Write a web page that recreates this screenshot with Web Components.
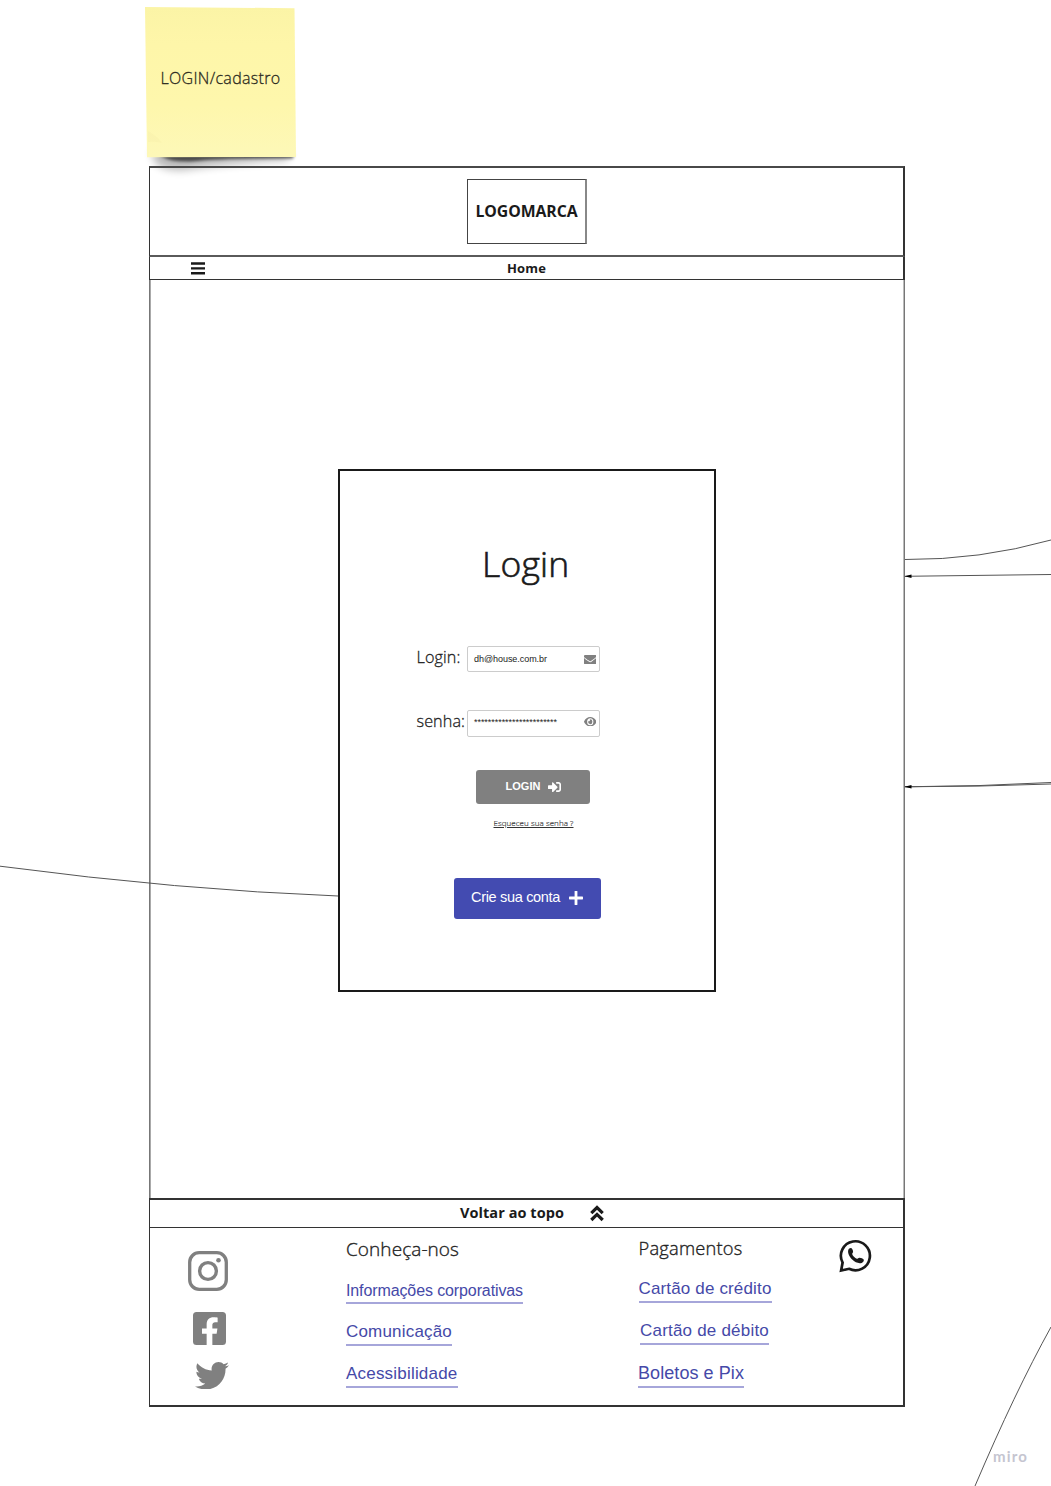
<!DOCTYPE html>
<html lang="pt-BR">
<head>
<meta charset="utf-8">
<title>LOGIN/cadastro</title>
<style>
html{background:#fff}
body{margin:0;width:1051px;height:1486px;overflow:hidden}
</style>
</head>
<body>
<flow-board></flow-board>
<script>
const define=(name,html,ready)=>{
  const t=document.createElement('template');
  t.innerHTML=html;
  customElements.define(name,class extends HTMLElement{
    connectedCallback(){
      if(this.shadowRoot)return;
      this.attachShadow({mode:'open'}).append(t.content.cloneNode(true));
      if(ready)ready(this);
    }
  });
};

/* One line of text: size, line height and tracked width come from attributes. */
define('text-line',`<style>
:host{display:block;white-space:pre;flex:none;font-family:"Open Sans",sans-serif}
:host([arial]){font-family:"Liberation Sans",Arial,sans-serif}
:host([light]){font-weight:300;-webkit-text-stroke:.018em currentColor}
span{display:inline-block;text-decoration:inherit}
</style><span><slot></slot></span>`,el=>{
  el.style.fontSize=el.getAttribute('size')+'px';
  el.style.lineHeight=el.getAttribute('lh')+'px';
  const w=+el.getAttribute('w'),s=el.shadowRoot.querySelector('span');
  const fit=()=>{
    s.style.letterSpacing='0px';
    const n=el.textContent.length;
    s.style.letterSpacing=((w-s.getBoundingClientRect().width)/n)+'px';
  };
  if(w){requestAnimationFrame(fit);document.fonts.ready.then(fit);}
});

const icons={
menu:['0 0 14 13','<path d="M0 .3h14v2.4H0zM0 5.2h14v2.4H0zM0 10.1h14v2.4H0z"/>'],
mail:['0 64 512 384','<path d="M502.3 190.8c3.9-3.1 9.7-.2 9.7 4.7V400c0 26.5-21.5 48-48 48H48c-26.5 0-48-21.5-48-48V195.6c0-5 5.7-7.8 9.7-4.7 22.4 17.4 52.1 39.5 154.1 113.6 21.1 15.4 56.7 47.8 92.2 47.6 35.7.3 72-32.8 92.3-47.6 102-74.1 131.6-96.3 154-113.7zM256 320c23.2.4 56.6-29.2 73.4-41.4 132.7-96.3 142.8-104.7 173.4-128.7 5.8-4.5 9.2-11.5 9.2-18.9v-19c0-26.5-21.5-48-48-48H48c-26.5 0-48 21.5-48 48v19c0 7.4 3.4 14.3 9.2 18.9 30.6 23.9 40.7 32.4 173.4 128.7 16.8 12.2 50.2 41.8 73.4 41.4z"/>'],
eye:['0 64 576 384','<path d="M572.52 241.4C518.29 135.59 410.93 64 288 64S57.68 135.64 3.48 241.41a32.35 32.35 0 0 0 0 29.19C57.71 376.41 165.07 448 288 448s230.32-71.64 284.52-177.41a32.35 32.35 0 0 0 0-29.19zM288 400a144 144 0 1 1 144-144 143.93 143.93 0 0 1-144 144zm0-240a95.31 95.31 0 0 0-25.31 3.79 47.85 47.85 0 0 1-66.9 66.9A95.78 95.78 0 1 0 288 160z"/>'],
enter:['0 64 512 384','<path d="M416 448h-84c-6.6 0-12-5.4-12-12v-40c0-6.6 5.4-12 12-12h84c17.7 0 32-14.3 32-32V160c0-17.7-14.3-32-32-32h-84c-6.6 0-12-5.4-12-12V76c0-6.6 5.4-12 12-12h84c53 0 96 43 96 96v192c0 53-43 96-96 96zm-47-201L201 79c-15-15-41-4.5-41 17v96H24c-13.3 0-24 10.7-24 24v96c0 13.3 10.7 24 24 24h136v96c0 21.5 26 32 41 17l168-168c9.3-9.4 9.3-24.6 0-34z"/>'],
plus:['0 0 14 14','<rect x="5.6" width="2.8" height="14" rx=".6"/><rect y="5.6" width="14" height="2.8" rx=".6"/>'],
up:['0 0 14 17','<path d="M1.3 8.1 7 2.5l5.7 5.600M1.3 15 7 9.4l5.7 5.600" fill="none" stroke="currentColor" stroke-width="3.2"/>'],
insta:['0 0 40 40','<rect x="1.7" y="1.7" width="36.6" height="36.6" rx="9.5" fill="none" stroke="currentColor" stroke-width="3.3"/><circle cx="20" cy="20" r="8.4" fill="none" stroke="currentColor" stroke-width="3.4"/><circle cx="30.5" cy="9.3" r="2.3"/>'],
fb:['0 32 448 448','<path d="M400 32H48A48 48 0 0 0 0 80v352a48 48 0 0 0 48 48h137.25V327.69h-63V256h63v-54.64c0-62.15 37-96.48 93.67-96.48 27.14 0 55.52 4.84 55.52 4.84v61h-31.27c-30.81 0-40.42 19.12-40.42 38.73V256h68.78l-11 71.69h-57.78V480H400a48 48 0 0 0 48-48V80a48 48 0 0 0-48-48z"/>'],
bird:['0 48 512 416','<path d="M459.37 151.716c.325 4.548.325 9.097.325 13.645 0 138.72-105.583 298.558-298.558 298.558-59.452 0-114.68-17.219-161.137-47.106 8.447.974 16.568 1.299 25.34 1.299 49.055 0 94.213-16.568 130.274-44.832-46.132-.975-84.792-31.188-98.112-72.772 6.498.974 12.995 1.624 19.818 1.624 9.421 0 18.843-1.3 27.614-3.573-48.081-9.747-84.143-51.98-84.143-102.985v-1.299c13.969 7.797 30.214 12.67 47.431 13.319-28.264-18.843-46.781-51.005-46.781-87.391 0-19.492 5.197-37.36 14.294-52.954 51.655 63.675 129.3 105.258 216.365 109.807-1.624-7.797-2.599-15.918-2.599-24.04 0-57.828 46.782-104.934 104.934-104.934 30.213 0 57.502 12.67 76.67 33.137 23.715-4.548 46.456-13.32 66.599-25.34-7.798 24.366-24.366 44.833-46.132 57.827 21.117-2.273 41.584-8.122 60.426-16.243-14.292 20.791-32.161 39.308-52.628 54.253z"/>'],
whats:['0 0 34 34','<path d="M3.6 23.6A14.5 14.5 0 1 1 10 29.8L2.1 31.6z" fill="none" stroke="currentColor" stroke-width="2.7"/><path d="M9.3 11c.6-1.5 2.1-2.3 3.2-1.7 1 .6 1.7 2.8 1.6 3.800-.1.9-1 1.200-.9 1.900.3 1.700 2.900 4.200 4.600 4.800.8.300 1.600-1.100 2.800-1 1.300.1 3.700.9 4.100 1.800.5 1.300-.5 2.800-2 3.300-2.900 1-6.700-.5-9.500-3.300-2.900-2.900-4.800-7-3.900-9.600z"/>']
};
define('ui-icon',`<style>:host{display:block;flex:none}svg{display:block;width:100%;height:100%;fill:currentColor}</style><svg preserveAspectRatio="none"></svg>`,el=>{
  const [box,body]=icons[el.getAttribute('name')],s=el.shadowRoot.querySelector('svg');
  s.setAttribute('viewBox',box);s.innerHTML=body;
});

define('sticky-note',`<style>
:host{display:block;position:relative;width:150px;height:150px;flex:none}
svg{position:absolute;left:-12px;top:-7px;overflow:visible}
div{position:relative;display:flex;justify-content:center;padding:59px 0 0 1px;color:#2b2a20}
</style>
<svg width="180" height="190"><defs>
<linearGradient id="p" x2="0" y2="1"><stop stop-color="#fbf4a6"/><stop offset=".25" stop-color="#fef6a9"/><stop offset=".65" stop-color="#fef7ac"/><stop offset="1" stop-color="#fdf8b8"/></linearGradient>
<filter id="b" x="-20%" y="-100%" width="140%" height="300%"><feGaussianBlur stdDeviation="4"/></filter>
<filter id="c" x="-20%" y="-100%" width="140%" height="300%"><feGaussianBlur stdDeviation="1.6"/></filter></defs>
<path d="M18 151 158 153 154 160Q90 164 50 170 30 171 22 162z" fill="#000" opacity=".28" filter="url(#b)"/>
<path d="M22 153 161 154 160 158.500Q90 158 58 161.500 38 162 30 157z" fill="#000" opacity=".6" filter="url(#c)"/>
<path d="M12 7 161.5 8.2 163 157 14 157.2z" fill="url(#p)"/>
<path d="M15 131Q24 136 29 143 22 141 15 142z" fill="#eee59f" opacity=".2"/>
</svg>
<div><slot></slot></div>`);

define('site-header',`<style>
:host{display:flex;flex-direction:column;color:#1a1a1a}
.top{box-sizing:border-box;height:91px;display:flex;justify-content:center;border:solid #333;border-width:2px 2px 2px 1px;border-top-color:#484848;border-bottom-color:#5a5a5a;padding-top:11px}
.logo{box-sizing:border-box;width:120px;height:65px;border:1px solid #444;border-right:2px solid #888;display:flex;justify-content:center;padding-top:19px;font-weight:700;margin-left:1px}
nav{box-sizing:border-box;height:23px;border:solid #333;border-width:0 2px 1px 1px;display:grid;grid-template-columns:1fr auto 1fr;font-weight:700}
ui-icon{width:14px;height:13px;margin:5px 0 0 40.5px}
</style>
<div class="top"><div class="logo"><text-line size="15.8" lh="24" w="102">LOGOMARCA</text-line></div></div>
<nav><ui-icon name="menu"></ui-icon><text-line size="13" lh="23" w="39">Home</text-line><i></i></nav>`);

define('input-field',`<style>
:host{display:flex;align-items:flex-start;color:#222;height:27px}
.l{width:51px;margin-top:-1px}
.box{box-sizing:border-box;width:133px;height:27px;border:1px solid #ccc;border-radius:2px;display:flex;justify-content:space-between;padding:0 3px 0 6px;color:#1a1a1a}
.i{width:12.5px;height:9.5px;color:#808080;margin-top:7.5px}
:host([icon=eye]) .i{margin-top:5.5px}
:host([icon=mail]) .box{height:26px}
</style><div class="l"><slot name="label"></slot></div><div class="box"><slot></slot><div class="i"></div></div>`,el=>{
  const i=document.createElement('ui-icon');
  i.setAttribute('name',el.getAttribute('icon'));
  i.style.height='100%';
  el.shadowRoot.querySelector('.i').append(i);
});

define('action-button',`<style>
:host{box-sizing:border-box;display:flex;border-radius:3px;color:#fff;background:var(--fill)}
</style><slot></slot>`);

define('login-card',`<style>
:host{box-sizing:border-box;display:flex;flex-direction:column;width:378px;height:523px;border:2px solid #1a1a1a;color:#1a1a1a}
.title{margin:68px 0 0 142px}
input-field{margin-left:76px}
.first{margin-top:59px}.second{margin-top:37px}
[slot=label]{margin-left:.5px}
.go{--fill:#808080;width:114px;height:34px;margin:33px 0 0 136px;padding-left:29.5px}
.go ui-icon{width:13px;height:10px;margin:12px 0 0 7.5px}
.forgot{margin:12px 0 0 153.5px;text-decoration:underline;color:#333;text-underline-offset:1px;width:max-content}
.new{--fill:#434bb1;width:147px;height:41px;margin:49px 0 0 114px;padding-left:17px}
.new ui-icon{width:14px;height:14px;margin:13px 0 0 9px}
</style>
<text-line light class="title" size="35.5" lh="48" w="87.5">Login</text-line>
<input-field class="first" icon="mail"><text-line light slot="label" size="16.2" lh="25" w="44">Login:</text-line><text-line arial size="9" lh="25" w="73">dh@house.com.br</text-line></input-field>
<input-field class="second" icon="eye"><text-line light slot="label" size="16.2" lh="25" w="48.5">senha:</text-line><text-line arial size="9" lh="23" w="83">************************</text-line></input-field>
<action-button class="go"><text-line arial size="11" lh="32" w="35" style="font-weight:700">LOGIN</text-line><ui-icon name="enter"></ui-icon></action-button>
<text-line light class="forgot" size="8" lh="13" w="80">Esqueceu sua senha ?</text-line>
<action-button class="new"><text-line arial size="14.5" lh="38" w="89">Crie sua conta</text-line><ui-icon name="plus"></ui-icon></action-button>`);

define('footer-link',`<style>
:host{display:flex;box-sizing:border-box;height:24px;width:max-content;border-bottom:2px solid #a6a6da;color:#4549a8}
</style><slot></slot>`);

define('site-footer',`<style>
:host{display:flex;flex-direction:column;color:#1a1a1a}
.bar{box-sizing:border-box;height:30px;border:solid #333;border-width:2px 2px 1px 1px;display:flex;padding-left:310px;font-weight:700}
.bar ui-icon{width:14px;height:17px;margin:5px 0 0 26px}
.body{box-sizing:border-box;height:179px;border:solid #333;border-width:0 2px 2px 1px;display:grid;grid-template-columns:196px 292.5px 201px auto}
.soc{color:#808080;padding:23px 0 0 38px}
.ig{width:40px;height:40px}.fb{width:33px;height:33px;margin:20.5px 0 0 5px}.tw{width:34px;height:27.5px;margin:17px 0 0 6.5px}
.h{color:#222}
.wa{width:34px;height:34px;margin:11px 0 0 -.5px}
</style>
<div class="bar"><text-line size="14.5" lh="26" w="104">Voltar ao topo</text-line><ui-icon name="up"></ui-icon></div>
<div class="body">
<div class="soc"><ui-icon class="ig" name="insta"></ui-icon><ui-icon class="fb" name="fb"></ui-icon><ui-icon class="tw" name="bird"></ui-icon></div>
<div><text-line light class="h" size="19" lh="30" w="113" style="margin-top:6px">Conheça-nos</text-line>
<footer-link style="margin-top:16px"><text-line arial size="16" lh="21" w="177">Informações corporativas</text-line></footer-link>
<footer-link style="margin-top:18px"><text-line arial size="17" lh="20" w="106">Comunicação</text-line></footer-link>
<footer-link style="margin-top:18px"><text-line arial size="17" lh="20" w="111.5">Acessibilidade</text-line></footer-link></div>
<div><text-line light class="h" size="18.3" lh="30" w="104" style="margin-top:5px">Pagamentos</text-line>
<footer-link style="margin-top:16px"><text-line arial size="17" lh="20" w="133">Cartão de crédito</text-line></footer-link>
<footer-link style="margin:18px 0 0 1.5px"><text-line arial size="17" lh="20" w="129">Cartão de débito</text-line></footer-link>
<footer-link style="margin:19px 0 0 -.5px"><text-line arial size="18" lh="18" w="106">Boletos e Pix</text-line></footer-link></div>
<ui-icon class="wa" name="whats"></ui-icon>
</div>`);

define('site-frame',`<style>
:host{display:flex;flex-direction:column;width:756px;height:1241px;margin-left:149px}
main{box-sizing:border-box;height:918px;border:solid #777;border-width:0 1px;box-shadow:inset 1px 0 #aaa,inset -1px 0 #bbb;display:flex;justify-content:center;padding:189px 0 0}
</style><site-header></site-header><main><login-card></login-card></main><site-footer></site-footer>`);

define('flow-board',`<style>
:host{display:block;position:relative;width:1051px;height:1486px;overflow:hidden;isolation:isolate}
.page{display:flex;flex-direction:column}
sticky-note{margin:7px 0 9px 145px;z-index:-1}
.links{position:absolute;inset:0;fill:none;stroke:#555;stroke-width:1;pointer-events:none}
.mark{position:absolute;right:23px;bottom:18px;color:#c5c5d0;font-weight:700}
.mark text-line{font-family:Lato,sans-serif}
</style>
<div class="page"><sticky-note><text-line light size="16" lh="24" w="120">LOGIN/cadastro</text-line></sticky-note><site-frame></site-frame></div>
<svg class="links" width="1051" height="1486">
<path d="M0 866.2Q180 890 338 896"/>
<path d="M905 559.5Q980 560 1051 540"/>
<path d="M905 576.3 1051 574.5M905 786.8Q980 786.5 1051 782.5M905 786.8Q980 786.7 1051 784"/>
<path d="M1051 1327Q1015 1392 975 1486"/>
<path d="M904.5 576.3l7-1.8v3.6zM904.5 786.7l7-1.8v3.6z" fill="#000" stroke="none"/>
</svg>
<div class="mark"><text-line size="15" lh="24" w="35">miro</text-line></div>`);
</script>
</body>
</html>
